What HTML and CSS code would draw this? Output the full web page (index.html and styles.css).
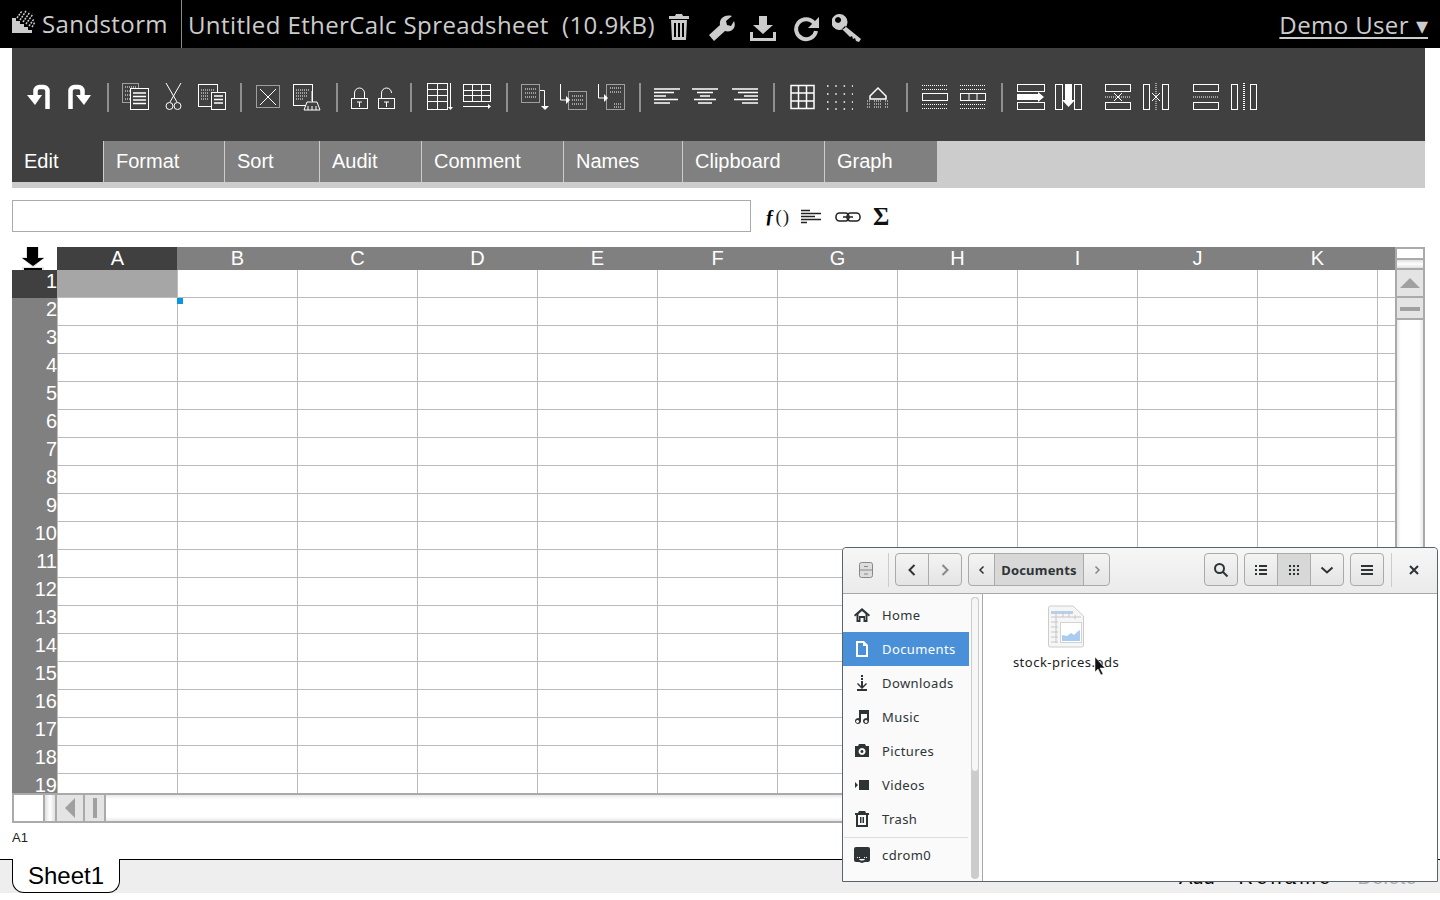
FILE: index.html
```html
<!DOCTYPE html>
<html lang="en">
<head>
  <meta charset="UTF-8" />
  <title>Untitled EtherCalc Spreadsheet - Sandstorm</title>
  <link rel="stylesheet" href="styles.css">
</head>
<body>

<header class="topbar">
  <svg class="logo" width="24" height="24" viewBox="0 0 24 24">
    <path class="solid" d="M0 24V9h4v3h4v3h4v3h4v3h4v3z"/>
    <path class="hatch" d="M5 9l5-7M8 11l6-9M11 13l7-10M14 15l7-10M17 17l5-7M20 18l3-5"/>
  </svg>
  <span class="brand">Sandstorm</span>
  <span class="title">Untitled EtherCalc Spreadsheet&nbsp; (10.9kB)</span>
  <div class="top-icons">
    <svg width="39" height="28" viewBox="0 0 39 28"><path class="solid" d="M7 0h6l1 2h6v3H0V2h6zM2 6h16l-1 20H3zM5 9v14h2V9zM9 9v14h2V9zM13 9v14h2V9z" fill-rule="evenodd"/></svg>
    <svg width="42" height="28" viewBox="0 0 42 28"><path class="solid" d="M1 21L12 11C11 5 16 0 24 2l-6 5 1 4 4 1 3-5c3 7-3 12-9 10L6 27z"/></svg>
    <svg width="42" height="28" viewBox="0 0 42 28"><path class="solid" d="M9 2h8v9h6L13 20 3 11h6zM0 18h3v6h20v-6h3v9H0z"/></svg>
    <svg width="40" height="28" viewBox="0 0 40 28"><path class="ring" d="M22 9a10 10 0 1 0 2 8"/><path class="solid" d="M27 3v11H16z"/></svg>
    <svg width="30" height="28" viewBox="0 0 30 28"><path class="solid" d="M8 0a8 8 0 1 1-1 16 8 8 0 0 1 1-16zM6 3a3 3 0 1 0 .1 0zM13 12l16 13-2 3-3-1-1-3-2 1-1-3-2 1-8-8z" fill-rule="evenodd"/></svg>
  </div>
  <a class="user">Demo User ▾</a>
</header>

<main class="sheet">
  <div class="toolbar">
    <svg width="42" height="30"><path class="bold" d="M21.5 27V9a4 4 0 0 0-4-4h-4a4 4 0 0 0-4 4v7"/><path class="fill" d="M1 13h15l-7 10z"/></svg>
    <svg width="39" height="30"><path class="bold" d="M2.5 27V9a4 4 0 0 1 4-4h4a4 4 0 0 1 4 4v7"/><path class="fill" d="M8 13h15l-7 10z"/></svg>
    <svg class="sep" width="15" height="30"><path d="M1 1v30"/></svg>
    <svg width="43" height="30"><rect class="dot" x=".5" y="1.5" width="16" height="19"/><path class="dot" d="M3 5h11M3 9h11M3 13h11M3 17h11"/><rect class="bg" x="8.5" y="6.5" width="18" height="21"/><path class="mid" d="M11 11h13M11 14.500h13M11 18h13M11 21.500h13"/></svg>
    <svg width="33" height="30"><path d="M1 1l11 19M16 1L5 20"/><circle cx="4.5" cy="24" r="3.5"/><circle cx="12.5" cy="24" r="3.5"/></svg>
    <svg width="42" height="30"><rect x=".5" y="2.5" width="19" height="22"/><path class="dot" d="M3 8h14M3 11h8M3 14h8M3 17h8"/><rect class="bg" x="13.5" y="10.5" width="14" height="17"/><path class="mid" d="M16 14h9M16 17.500h9M16 21h9"/></svg>
    <svg class="sep" width="16" height="30"><path d="M1 1v30"/></svg>
    <svg width="37" height="30"><rect class="dot" x=".5" y="3.5" width="23" height="22"/><path d="M4 7l16 16M20 7L4 23"/></svg>
    <svg width="43" height="30"><rect x=".5" y="2.5" width="19" height="21"/><path class="dot" d="M3 8h14M3 11h12M3 14h12M3 17h8"/><path class="bg" d="M19 9v10M14 20h10l3 8H11z"/><path d="M15 24v4M19 24v4M23 24v4"/></svg>
    <svg class="sep" width="15" height="30"><path d="M1 1v30"/></svg>
    <svg width="27" height="30"><rect x=".5" y="16.5" width="16" height="10"/><path d="M3.5 16v-5a5 5 0 0 1 10 0v5M6 20h5M8.5 20v5"/></svg>
    <svg width="32" height="30"><rect x=".5" y="16.5" width="16" height="10"/><path d="M3.5 16v-5a5 5 0 0 1 10 0M6 20h5M8.5 20v5"/></svg>
    <svg class="sep" width="17" height="30"><path d="M1 1v30"/></svg>
    <svg width="36" height="30"><rect x=".5" y="1.5" width="20" height="26"/><path d="M.5 7.5h20M.5 13.5h20M.5 19.5h20M10.5 1v26M23.5 1v25"/><path class="fill" d="M21 25h5l-2.5 3z"/></svg>
    <svg width="43" height="30"><rect x=".5" y="2.5" width="27" height="17"/><path d="M9.5 2v17M18.5 2v17M.5 8.5h27M.5 13.5h27M0 24.5h25"/><path class="fill" d="M25 22v5l3-2.5z"/></svg>
    <svg class="sep" width="15" height="30"><path d="M1 1v30"/></svg>
    <svg width="38" height="30"><rect class="dot" x=".5" y="2.5" width="18" height="18"/><path class="dot" d="M4 7h11M4 11h11M4 15h11"/><path d="M19 8.5h4.5V25"/><path class="fill" d="M20 24h8l-4 4z"/></svg>
    <svg width="38" height="30"><path d="M1.5 2v16H8"/><path class="fill" d="M7 14v8l4-4z"/><rect class="dot" x="9.5" y="9.5" width="18" height="18"/><path class="dot" d="M13 14h11M13 18h11M13 22h11"/></svg>
    <svg width="42" height="30"><path d="M1.5 2v14H8"/><path class="fill" d="M7 12v8l4-4z"/><rect class="dot" x="9.5" y="2.5" width="18" height="25"/><path class="dot" d="M13 6h11M13 10h11M17 22h7M17 25h7"/></svg>
    <svg class="sep" width="15" height="30"><path d="M1 1v30"/></svg>
    <svg width="38" height="30"><path class="mid" d="M0 7h26M0 10.500h20M0 14h12M0 17.500h24M0 21h16"/></svg>
    <svg width="40" height="30"><path class="mid" d="M0 7h26M5 10.500h16M8 14h10M2 17.500h22M6 21h14"/></svg>
    <svg width="41" height="30"><path class="mid" d="M0 7h26M6 10.500h20M12 14h14M2 17.500h24M10 21h16"/></svg>
    <svg class="sep" width="17" height="30"><path d="M1 1v30"/></svg>
    <svg width="37" height="30"><path class="mid" d="M1 3.500h23v23H1zM1 11h23M1 19h23M8.500 3.500v23M16.500 3.500v23"/></svg>
    <svg width="39" height="30"><path class="dots" d="M0 4h26M0 12h26M0 20h26M0 27h26"/></svg>
    <svg width="40" height="30"><path class="mid" d="M4 14l8-8 8 8v3H4z"/><path class="dot" d="M1 19h4M1 22h4M1 25h4M8 19h8M8 22h8M8 25h8M19 19h4M19 22h4M19 25h4"/></svg>
    <svg class="sep" width="16" height="30"><path d="M1 1v30"/></svg>
    <svg width="38" height="30"><path class="dot" d="M0 3.500h26M0 7.500h26M0 22.500h26M0 26.500h26"/><rect x=".5" y="11.500" width="25" height="7"/></svg>
    <svg width="41" height="30"><path class="dot" d="M0 3.500h26M0 7.500h26M0 22.500h26M0 26.500h26"/><rect x=".5" y="11.500" width="25" height="7"/><path d="M9 11v7M17 11v7"/></svg>
    <svg class="sep" width="16" height="30"><path d="M1 1v30"/></svg>
    <svg width="38" height="30"><rect x=".5" y="2.500" width="27" height="7"/><rect x=".5" y="20.500" width="27" height="7"/><path class="fill" d="M0 12h21v-2l6 5-6 5v-2H0z"/></svg>
    <svg width="50" height="30"><rect x=".5" y="2.500" width="7" height="25"/><rect x="19.500" y="2.500" width="7" height="25"/><path class="fill" d="M10 2h7v16h3l-6.500 7L7 18h3z"/></svg>
    <svg width="38" height="30"><rect x=".5" y="2.500" width="25" height="7"/><rect x=".5" y="20.500" width="25" height="7"/><path class="dot" d="M0 15h26"/><path d="M9 11l8 8M17 11l-8 8"/></svg>
    <svg width="50" height="30"><rect x=".5" y="2.500" width="6" height="25"/><rect x="19.500" y="2.500" width="6" height="25"/><path class="dot" d="M13 1v28"/><path d="M9 11l8 8M17 11l-8 8"/></svg>
    <svg width="38" height="30"><rect x=".5" y="2.500" width="25" height="7"/><rect x=".5" y="20.500" width="25" height="7"/><path class="dot" d="M0 15h26"/></svg>
    <svg width="30" height="30"><rect x=".5" y="2.500" width="6" height="25"/><rect x="19.500" y="2.500" width="6" height="25"/><path class="dot wide-dot" d="M13 1v28"/></svg>
  </div>

  <nav class="tabs">
    <a class="tab active">Edit</a>
    <a class="tab">Format</a>
    <a class="tab">Sort</a>
    <a class="tab">Audit</a>
    <a class="tab">Comment</a>
    <a class="tab">Names</a>
    <a class="tab">Clipboard</a>
    <a class="tab">Graph</a>
  </nav>

  <div class="formula">
    <input type="text" class="formula-input">
    <span class="fx"><b>ƒ</b>()</span>
    <svg class="f-icon" width="21" height="16"><path d="M0 1.500h9M0 4.500h20M0 7.500h14M0 10.500h20M0 13.500h6"/></svg>
    <svg class="f-icon link" width="26" height="16"><rect x="1" y="4" width="13" height="8" rx="3.500"/><rect x="12" y="4" width="13" height="8" rx="3.500"/><path d="M8 8h10"/></svg>
    <span class="sigma">Σ</span>
  </div>

  <div class="grid-wrap">
    <div class="grid-main">
      <table class="grid">
        <tr class="col-head">
          <th class="corner">
            <svg width="26" height="23" viewBox="0 0 26 23"><path class="glow" d="M7 0h13v10h6L14 21 2 10h5zM3 20h22v3H3z"/><path d="M8 0h11v11h6L14 19 3 11h5zM5 21h18v2H5z"/></svg>
          </th>
          <th class="on">A</th><th>B</th><th>C</th><th>D</th><th>E</th><th>F</th><th>G</th><th>H</th><th>I</th><th>J</th><th>K</th><th class="stub"></th>
        </tr>
        <tr><th class="row-head on">1</th><td class="cur"><i class="handle"></i></td><td></td><td></td><td></td><td></td><td></td><td></td><td></td><td></td><td></td><td></td><td></td></tr>
        <tr><th class="row-head">2</th><td></td><td></td><td></td><td></td><td></td><td></td><td></td><td></td><td></td><td></td><td></td><td></td></tr>
        <tr><th class="row-head">3</th><td></td><td></td><td></td><td></td><td></td><td></td><td></td><td></td><td></td><td></td><td></td><td></td></tr>
        <tr><th class="row-head">4</th><td></td><td></td><td></td><td></td><td></td><td></td><td></td><td></td><td></td><td></td><td></td><td></td></tr>
        <tr><th class="row-head">5</th><td></td><td></td><td></td><td></td><td></td><td></td><td></td><td></td><td></td><td></td><td></td><td></td></tr>
        <tr><th class="row-head">6</th><td></td><td></td><td></td><td></td><td></td><td></td><td></td><td></td><td></td><td></td><td></td><td></td></tr>
        <tr><th class="row-head">7</th><td></td><td></td><td></td><td></td><td></td><td></td><td></td><td></td><td></td><td></td><td></td><td></td></tr>
        <tr><th class="row-head">8</th><td></td><td></td><td></td><td></td><td></td><td></td><td></td><td></td><td></td><td></td><td></td><td></td></tr>
        <tr><th class="row-head">9</th><td></td><td></td><td></td><td></td><td></td><td></td><td></td><td></td><td></td><td></td><td></td><td></td></tr>
        <tr><th class="row-head">10</th><td></td><td></td><td></td><td></td><td></td><td></td><td></td><td></td><td></td><td></td><td></td><td></td></tr>
        <tr><th class="row-head">11</th><td></td><td></td><td></td><td></td><td></td><td></td><td></td><td></td><td></td><td></td><td></td><td></td></tr>
        <tr><th class="row-head">12</th><td></td><td></td><td></td><td></td><td></td><td></td><td></td><td></td><td></td><td></td><td></td><td></td></tr>
        <tr><th class="row-head">13</th><td></td><td></td><td></td><td></td><td></td><td></td><td></td><td></td><td></td><td></td><td></td><td></td></tr>
        <tr><th class="row-head">14</th><td></td><td></td><td></td><td></td><td></td><td></td><td></td><td></td><td></td><td></td><td></td><td></td></tr>
        <tr><th class="row-head">15</th><td></td><td></td><td></td><td></td><td></td><td></td><td></td><td></td><td></td><td></td><td></td><td></td></tr>
        <tr><th class="row-head">16</th><td></td><td></td><td></td><td></td><td></td><td></td><td></td><td></td><td></td><td></td><td></td><td></td></tr>
        <tr><th class="row-head">17</th><td></td><td></td><td></td><td></td><td></td><td></td><td></td><td></td><td></td><td></td><td></td><td></td></tr>
        <tr><th class="row-head">18</th><td></td><td></td><td></td><td></td><td></td><td></td><td></td><td></td><td></td><td></td><td></td><td></td></tr>
        <tr><th class="row-head">19</th><td></td><td></td><td></td><td></td><td></td><td></td><td></td><td></td><td></td><td></td><td></td><td></td></tr>
      </table>
    </div>
    <div class="vscroll">
      <div class="vs-box first"></div>
      <div class="vs-box second"></div>
      <div class="vs-btn up"><i class="tri-up"></i></div>
      <div class="vs-btn handle-v"><i class="bar-h"></i></div>
      <div class="vs-track"></div>
    </div>
  </div>

  <div class="hscroll">
    <div class="hs-box"></div>
    <div class="hs-small"></div>
    <div class="hs-btn"><i class="tri-left"></i></div>
    <div class="hs-btn narrow"><i class="bar-v"></i></div>
    <div class="hs-track"></div>
  </div>

  <div class="status">A1</div>
</main>

<footer class="sheetbar">
  <a class="sheet-tab">Sheet1</a>
  <div class="sheet-actions">
    <a>Add</a>
    <a class="rename">Rename</a>
    <a class="disabled">Delete</a>
  </div>
</footer>

<!-- file chooser window over the page -->
<div class="window">
  <div class="win-head">
    <svg class="cabinet" width="16" height="16" viewBox="0 0 16 16"><rect x="1.500" y=".5" width="13" height="15" rx="2"/><path d="M1.500 8h13M6 4.500h4M6 12h4"/></svg>
    <span class="head-sep"></span>
    <div class="btn-group">
      <button class="btn"><svg width="12" height="14" viewBox="0 0 12 14"><path class="chev dark" d="M8.500 2l-5 5 5 5"/></svg></button>
      <button class="btn"><svg width="12" height="14" viewBox="0 0 12 14"><path class="chev" d="M3.500 2l5 5-5 5"/></svg></button>
    </div>
    <div class="btn-group path">
      <button class="btn small"><svg width="8" height="10" viewBox="0 0 8 10"><path class="chev thin dark" d="M5.500 1.500L2 5l3.500 3.500"/></svg></button>
      <button class="btn crumb">Documents</button>
      <button class="btn small"><svg width="8" height="10" viewBox="0 0 8 10"><path class="chev thin" d="M2.500 1.500L6 5 2.500 8.500"/></svg></button>
    </div>
    <div class="head-right">
      <button class="btn single"><svg width="16" height="16" viewBox="0 0 16 16"><circle class="mag" cx="6.500" cy="6.500" r="4.500"/><path class="mag" d="M10 10l4.500 4.500"/></svg></button>
      <div class="btn-group">
        <button class="btn"><svg width="12" height="10" viewBox="0 0 12 10"><path class="glyph" d="M0 0h2v2H0zM4 0h8v2H4zM0 4h2v2H0zM4 4h8v2H4zM0 8h2v2H0zM4 8h8v2H4z"/></svg></button>
        <button class="btn pressed"><svg width="10" height="10" viewBox="0 0 10 10"><path class="glyph" d="M0 0h2v2H0zM4 0h2v2H4zM8 0h2v2H8zM0 4h2v2H0zM4 4h2v2H4zM8 4h2v2H8zM0 8h2v2H0zM4 8h2v2H4zM8 8h2v2H8z"/></svg></button>
        <button class="btn"><svg width="14" height="8" viewBox="0 0 14 8"><path class="chev dark" d="M1.500 1.500L7 6.500l5.500-5"/></svg></button>
      </div>
      <button class="btn single"><svg width="12" height="10" viewBox="0 0 12 10"><path class="glyph" d="M0 0h12v2H0zM0 4h12v2H0zM0 8h12v2H0z"/></svg></button>
      <span class="head-sep"></span>
      <svg class="close" width="10" height="10" viewBox="0 0 10 10"><path d="M1 1l8 8M9 1L1 9"/></svg>
    </div>
  </div>
  <div class="win-body">
    <aside class="places">
      <ul class="place-list">
        <li><svg width="16" height="16" viewBox="0 0 16 16"><path fill-rule="evenodd" d="M8 1L0 8l1 1.500 1.500-1.200V15h4v-4h3v4h4V8.300L15 9.500 16 8zM4.500 13V7L8 4l3.500 3v6H11V9H5v4z"/></svg>Home</li>
        <li class="sel"><svg width="16" height="16" viewBox="0 0 16 16"><path fill-rule="evenodd" d="M2 0h8l4 4v12H2zM4 2v12h8V5H9V2z"/></svg>Documents</li>
        <li><svg width="16" height="16" viewBox="0 0 16 16"><path d="M7 0h2v2H7zM7 3h2v2H7zM7 6h2v5l3-3 1 1-5 5-5-5 1-1 3 3zM3 14h10v2H3z"/></svg>Downloads</li>
        <li><svg width="16" height="16" viewBox="0 0 16 16"><path fill-rule="evenodd" d="M5 1h10v11a3 3 0 1 1-2-2.800V5H7v7a3 3 0 1 1-2-2.800zM3.500 11a1.500 1.500 0 1 0 .1 0zM12 11a1.500 1.500 0 1 0 .1 0z"/></svg>Music</li>
        <li><svg width="16" height="16" viewBox="0 0 16 16"><path fill-rule="evenodd" d="M5 1h6l1 2h3v11H1V3h3zM8 5a3.500 3.500 0 1 0 .1 0zM8 7a1.500 1.500 0 1 1-.1 0z"/></svg>Pictures</li>
        <li><svg width="16" height="16" viewBox="0 0 16 16"><path d="M5 3h10v10H5zM1 5l3 3-3 3z"/></svg>Videos</li>
        <li><svg width="16" height="16" viewBox="0 0 16 16"><path fill-rule="evenodd" d="M5 0h6l1 2h3v2h-1v12H2V4H1V2h3zM4 4v10h8V4zM6 6h1v6H6zM9 6h1v6H9zM7.500 6h1v6h-1z"/></svg>Trash</li>
      </ul>
      <div class="place-sep"></div>
      <ul class="place-list">
        <li><svg width="16" height="16" viewBox="0 0 16 16"><path fill-rule="evenodd" d="M2 0h12a2 2 0 0 1 2 2v11a2 2 0 0 1-2 2h-3l-3 1-3-1H2a2 2 0 0 1-2-2V2a2 2 0 0 1 2-2zM3 10v1h1v-1zM5 10v1h1v-1zM10 10v1h1v-1zM12 10v1h1v-1zM5 12c1 2 5 2 6 0z"/></svg>cdrom0</li>
      </ul>
      <div class="place-scroll"><div class="place-thumb"></div></div>
    </aside>
    <section class="files">
      <div class="file">
        <svg width="38" height="44" viewBox="0 0 38 44">
          <path class="paper" d="M1.500 3a2 2 0 0 1 2-2H26l10.500 10v29a2 2 0 0 1-2 2h-31a2 2 0 0 1-2-2z"/>
          <path class="sheet-top" d="M4 6h22v3H4z"/>
          <path class="sheet-lines" d="M4 12h30M4 17h7M4 22h7M4 27h7M4 32h7M4 37h7M9 6v32M16 6v6M22 6v6M28 10v4"/>
          <rect class="chart" x="13.500" y="17.500" width="21" height="20"/>
          <path class="area" d="M15 36v-6l5 1 4-3 3 2 3-3 3-2v11z"/>
        </svg>
        <span class="file-name">stock-prices.ods</span>
      </div>
    </section>
  </div>
  <svg class="pointer" width="12" height="20" viewBox="0 0 12 20"><path d="M1 0v15l3-3 3 6 2-1-3-6h5z"/></svg>
</div>

</body>
</html>
```

FILE: styles.css
```css
* {
  box-sizing: border-box;
}

html, body {
  height: 100%;
}

body {
  margin: 0;
  height: 900px;
  overflow: hidden;
  font-family: "Liberation Sans", Arial, sans-serif;
  background-color: #fff;
}

/* sandstorm bar */
.topbar {
  height: 48px;
  background-color: #000;
  color: #ccc;
  display: flex;
  align-items: center;
  font-family: "Open Sans", sans-serif;
  font-size: 24px;
  letter-spacing: .4px;
  padding-left: 12px;
}

.topbar svg {
  flex: none;
}

.logo {
  margin-top: -6px;
}

.logo .solid, .top-icons .solid {
  fill: #ccc;
}

.logo .hatch {
  stroke: #ccc;
  stroke-width: 1.5;
  stroke-dasharray: 2 1;
  fill: none;
}

.brand {
  margin-left: 6px;
  padding-right: 13px;
  height: 48px;
  line-height: 48px;
  border-right: 1px solid #888;
}

.title {
  margin-left: 6px;
  white-space: pre;
}

.top-icons {
  display: flex;
  align-items: center;
  margin-left: 14px;
  margin-top: 7px;
}

.top-icons .ring {
  fill: none;
  stroke: #ccc;
  stroke-width: 4;
}

.user {
  margin-left: auto;
  margin-right: 12px;
  text-decoration: underline;
  text-underline-offset: 3px;
}

/* editor */
.sheet {
  padding: 0 15px 0 12px;
}

.toolbar {
  height: 93px;
  background-color: #404040;
  display: flex;
  padding: 34px 0 0 14px;
}

.toolbar svg {
  flex: none;
  fill: none;
  stroke: #fff;
  stroke-width: 1;
}

.toolbar .sep {
  stroke: #aaa;
  stroke-width: 1.5;
}

.toolbar .bold {
  stroke-width: 4.5;
}

.toolbar .fill {
  fill: #fff;
  stroke: none;
}

.toolbar .bg {
  fill: #404040;
}

.toolbar .mid {
  stroke-width: 1.5;
}

.toolbar .dot {
  stroke-dasharray: 1 1;
}

.toolbar .dots {
  stroke-width: 1.5;
  stroke-dasharray: 1.5 6.8;
}

.toolbar .wide-dot {
  stroke-width: 2;
}

.tabs {
  height: 47px;
  background-color: #ccc;
  display: flex;
  align-items: flex-start;
}

.tab {
  height: 41px;
  line-height: 41px;
  padding-left: 12px;
  margin-right: 1px;
  font-size: 20px;
  color: #fff;
  background-color: #808080;
}

.tab:nth-child(1) { width: 91px; }
.tab:nth-child(2) { width: 120px; }
.tab:nth-child(3) { width: 94px; }
.tab:nth-child(4) { width: 101px; }
.tab:nth-child(5) { width: 141px; }
.tab:nth-child(6) { width: 118px; }
.tab:nth-child(7) { width: 141px; }
.tab:nth-child(8) { width: 112px; }

.tab.active {
  background-color: #404040;
}

.formula {
  display: flex;
  align-items: center;
  height: 32px;
  margin-top: 12px;
}

.formula-input {
  width: 739px;
  height: 32px;
  border: 1px solid #aaa;
  background-color: #fff;
  margin: 0;
}

.fx {
  margin-left: 14px;
  width: 36px;
  padding-top: 2px;
  font-family: "Liberation Serif", serif;
  font-size: 19px;
  letter-spacing: 1px;
  color: #222;
}

.fx b {
  color: #000;
}

.f-icon {
  margin-top: 1px;
  fill: none;
  stroke: #222;
  stroke-width: 1.5;
}

.f-icon.link {
  margin-left: 13px;
}

.sigma {
  margin-left: 12px;
  padding-top: 1px;
  font-family: "Liberation Serif", serif;
  font-size: 25px;
  font-weight: bold;
  color: #111;
}

/* grid */
.grid-wrap {
  display: flex;
  height: 547px;
  margin-top: 15px;
}

.grid-main {
  width: 1383px;
  height: 546px;
  overflow: hidden;
}

.grid {
  table-layout: fixed;
  width: 1383px;
  border-collapse: separate;
  border-spacing: 0;
  font-size: 20px;
}

.grid th, .grid td {
  padding: 0;
  font-weight: normal;
}

.col-head th {
  width: 120px;
  height: 23px;
  line-height: 23px;
  padding-left: 1px;
  color: #fff;
  background-color: #808080;
  text-align: center;
}

.col-head .corner {
  width: 45px;
  padding: 0;
  background-color: #fff;
}

.corner svg {
  display: block;
  margin-left: 7px;
}

.corner .glow {
  fill: #e2e2e2;
}

.col-head .stub {
  width: 18px;
}

.col-head .on, .row-head.on {
  background-color: #404040;
}

.row-head {
  height: 28px;
  text-align: right;
  vertical-align: top;
  color: #fff;
  background-color: #808080;
  line-height: 22px;
}

.grid td {
  height: 28px;
  border-left: 1px solid #bbb;
  border-bottom: 1px solid #bbb;
  position: relative;
}

.grid td.cur {
  background-color: #a6a6a6;
  border-left: none;
}

.handle {
  position: absolute;
  right: -6px;
  bottom: -7px;
  width: 6px;
  height: 6px;
  background-color: #0a96dc;
  z-index: 2;
}

.vscroll {
  width: 30px;
  display: flex;
  flex-direction: column;
  border-left: 2px solid #aaa;
  border-right: 2px solid #aaa;
  border-top: 2px solid #aaa;
}

.vs-box {
  border-bottom: 2px solid #aaa;
}

.vs-box.first {
  height: 11px;
  background-color: #fff;
}

.vs-box.second {
  height: 10px;
  background: linear-gradient(to bottom, #e0e0e0, #fff, #e0e0e0);
}

.vs-btn {
  background-color: #e4e4e4;
  border-bottom: 2px solid #aaa;
  display: flex;
  align-items: center;
  justify-content: center;
}

.vs-btn.up {
  height: 28px;
}

.vs-btn.handle-v {
  height: 22px;
  padding-top: 2px;
}

.tri-up {
  width: 0;
  height: 0;
  border-left: 10px solid transparent;
  border-right: 10px solid transparent;
  border-bottom: 10px solid #a0a0a0;
}

.bar-h {
  width: 20px;
  height: 4px;
  background-color: #a0a0a0;
}

.vs-track {
  flex: 1;
  background: linear-gradient(to right, #e8e8e8, #fff 15%, #fff 85%, #e8e8e8);
}

.hscroll {
  display: flex;
  height: 30px;
  border: 2px solid #aaa;
  margin-top: -1px;
  width: 1413px;
}

.hs-box {
  width: 31px;
  background-color: #fff;
  border-right: 2px solid #aaa;
}

.hs-small {
  width: 12px;
  border-right: 2px solid #aaa;
  background: linear-gradient(to right, #e0e0e0, #fff, #e0e0e0);
}

.hs-btn {
  width: 28px;
  background-color: #e4e4e4;
  border-right: 2px solid #aaa;
  display: flex;
  align-items: center;
  justify-content: center;
}

.hs-btn.narrow {
  width: 21px;
}

.tri-left {
  width: 0;
  height: 0;
  border-top: 10px solid transparent;
  border-bottom: 10px solid transparent;
  border-right: 10px solid #a0a0a0;
}

.bar-v {
  width: 4px;
  height: 20px;
  background-color: #a0a0a0;
}

.hs-track {
  flex: 1;
  background: linear-gradient(to bottom, #e8e8e8, #fff 15%, #fff 85%, #e8e8e8);
}

.status {
  font-size: 13px;
  line-height: 15px;
  margin-top: 7px;
  color: #222;
}

/* sheet tabs */
.sheetbar {
  position: absolute;
  left: 0;
  right: 0;
  top: 859px;
  height: 34px;
  background-color: #eee;
  border-top: 1px solid #000;
  display: flex;
}

.sheet-tab {
  margin-left: 12px;
  width: 108px;
  height: 34px;
  margin-top: -1px;
  border: 1px solid #000;
  border-top: none;
  border-radius: 0 0 12px 12px;
  background-color: #fff;
  font-size: 24px;
  line-height: 34px;
  text-align: center;
  color: #000;
}

.sheet-actions {
  margin-left: auto;
  margin-right: 23px;
  display: flex;
  gap: 24px;
  font-size: 20px;
  line-height: 34px;
  color: #000;
}

.sheet-actions .rename {
  letter-spacing: 3.2px;
}

.sheet-actions .disabled {
  color: #aaa;
  letter-spacing: .3px;
}

/* file chooser */
.window {
  position: absolute;
  left: 842px;
  top: 547px;
  width: 596px;
  height: 335px;
  border: 1px solid #5a626a;
  border-radius: 4px 4px 0 0;
  background-color: #fff;
  font-family: "Noto Sans", sans-serif;
  font-size: 13px;
  color: #2e3436;
  display: flex;
  flex-direction: column;
  z-index: 5;
}

.win-head {
  height: 46px;
  flex: none;
  border-bottom: 1px solid #a8a8a8;
  border-radius: 4px 4px 0 0;
  background: linear-gradient(to bottom, #f6f6f6, #ebebeb);
  display: flex;
  align-items: center;
  padding: 0 0 2px 15px;
}

.cabinet {
  fill: #ddd;
  stroke: #888;
}

.head-sep {
  width: 1px;
  height: 34px;
  background-color: #ccc;
  margin: 0 6px 0 14px;
}

.btn-group {
  display: flex;
}

.btn-group.path {
  margin-left: 6px;
}

.btn {
  height: 33px;
  width: 34px;
  margin: 0 0 0 -1px;
  padding: 0;
  border: 1px solid #aaa;
  background: linear-gradient(to bottom, #f4f4f4, #e4e4e4);
  display: flex;
  align-items: center;
  justify-content: center;
  font-family: "Noto Sans", sans-serif;
  color: #2e3436;
}

.btn-group .btn:first-child {
  margin-left: 0;
  border-radius: 4px 0 0 4px;
}

.btn-group .btn:last-child {
  border-radius: 0 4px 4px 0;
}

.btn.single {
  width: 34px;
  margin: 0;
  border-radius: 4px;
}

.btn.small {
  width: 27px;
}

.btn.crumb, .btn.pressed {
  background: #d8d8d8;
}

.btn.crumb {
  width: 90px;
  font-size: 13px;
  font-weight: bold;
  letter-spacing: .2px;
}

.chev {
  fill: none;
  stroke: #888;
  stroke-width: 2;
}

.chev.thin {
  stroke-width: 1.500;
}

.chev.dark {
  stroke: #2e3436;
}

.glyph {
  fill: #2e3436;
}

.mag {
  fill: none;
  stroke: #2e3436;
  stroke-width: 2;
}

.head-right {
  margin-left: auto;
  display: flex;
  align-items: center;
  gap: 6px;
  padding-right: 18px;
}

.head-right .head-sep {
  margin: 0 11px 0 1px;
}

.close {
  fill: none;
  stroke: #2e3436;
  stroke-width: 2;
}

.win-body {
  flex: 1;
  display: flex;
  min-height: 0;
}

.places {
  width: 140px;
  flex: none;
  position: relative;
  background-color: #fafafa;
  border-right: 1px solid #a8a8a8;
  padding-top: 4px;
  letter-spacing: .4px;
}

.place-list {
  list-style: none;
  margin: 0;
  padding: 0;
  width: 126px;
}

.place-list li {
  height: 34px;
  display: flex;
  align-items: center;
  padding-left: 11px;
  gap: 12px;
}

.place-list svg {
  fill: #2e3436;
  flex: none;
}

.place-list li.sel {
  background-color: #4a90d9;
  color: #fff;
}

.place-list li.sel svg {
  fill: #fff;
}

.place-sep {
  height: 1px;
  width: 124px;
  margin: 1px 0 0 1px;
  background-color: #ddd;
}

.place-scroll {
  position: absolute;
  left: 128px;
  top: 3px;
  width: 8px;
  height: 282px;
  border-radius: 4px;
  background-color: #ccc;
}

.place-thumb {
  height: 175px;
  border: 1px solid #ccc;
  border-radius: 4px;
  background-color: #f6f6f6;
}

.files {
  flex: 1;
  padding: 11px 0 0 30px;
}

.file {
  width: 106px;
  display: flex;
  flex-direction: column;
  align-items: center;
}

.file-name {
  margin-top: 4px;
  letter-spacing: .5px;
  white-space: nowrap;
  color: #222;
}

.paper {
  fill: #f6f6f6;
  stroke: #ccc;
}

.sheet-top {
  fill: #b7d0ec;
}

.sheet-lines {
  fill: none;
  stroke: #c6c6c6;
}

.chart {
  fill: #fff;
  stroke: #aaa;
  stroke-dasharray: 1 1;
}

.area {
  fill: #a9cdf0;
}

.pointer {
  position: absolute;
  left: 251px;
  top: 109px;
  fill: #111;
  stroke: #fff;
  stroke-width: .5;
}
```
